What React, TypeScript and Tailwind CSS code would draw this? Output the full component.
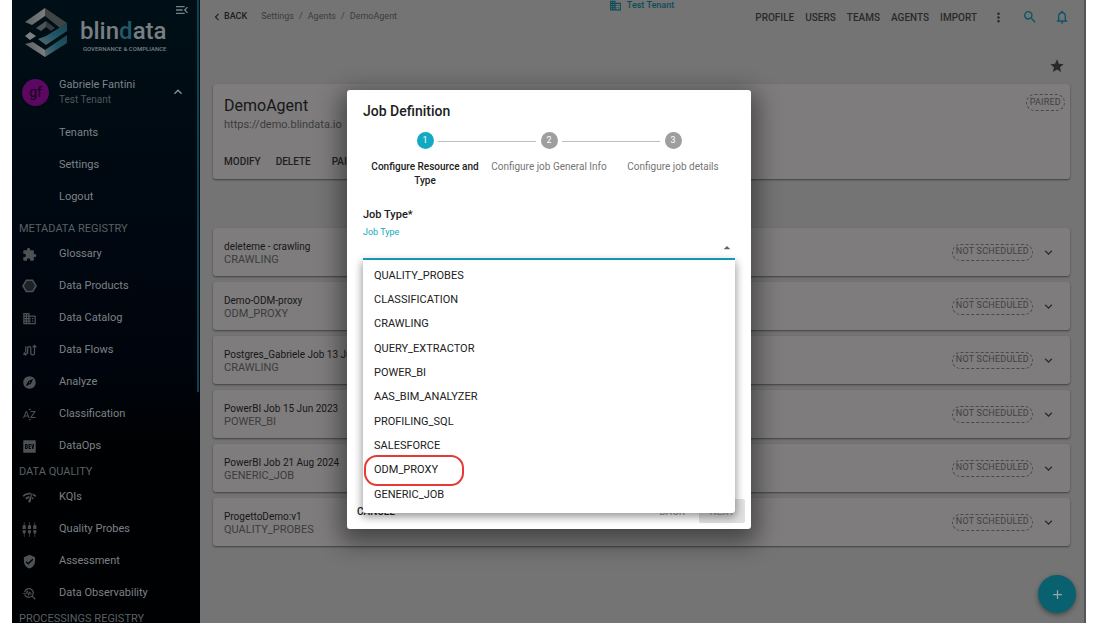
import {
  MdAdd,
  MdArrowDropUp,
  MdBusiness,
  MdChevronLeft,
  MdExpandLess,
  MdExpandMore,
  MdExplore,
  MdExtension,
  MdMenuOpen,
  MdMoreVert,
  MdNetworkCheck,
  MdOutlineNotifications,
  MdSearch,
  MdSortByAlpha,
  MdStar,
  MdTroubleshoot,
  MdVerifiedUser,
} from 'react-icons/md';

function HexagonIcon({ className }: { className?: string }) {
  return (
    <svg viewBox="0 0 24 24" fill="#1b2327" stroke="currentColor" strokeWidth="2.5" className={className}>
      <path d="M7 2h10l5.500 9L17 20H7l-5.500-9z" />
    </svg>
  );
}

function FlowIcon({ className }: { className?: string }) {
  return (
    <svg viewBox="0 0 24 24" fill="none" stroke="currentColor" strokeWidth="2" className={className}>
      <path d="M6 5v10M3 15l3 4 3-4M6 15a1 1 0 0 0 0 0M2 18h4M9 17V7a3 3 0 0 1 5 0v9a3 3 0 0 0 6 0V4M17 7l3-3 3 3" />
    </svg>
  );
}

function DevIcon({ className }: { className?: string }) {
  return (
    <svg viewBox="0 0 24 24" fill="currentColor" className={className}>
      <path
        fillRule="evenodd"
        d="M3 2h18a1 1 0 0 1 1 1v18a1 1 0 0 1-1 1H3a1 1 0 0 1-1-1V3a1 1 0 0 1 1-1zM5 8v8h2.500L9 14.500v-5L7.500 8zm1.500 1.500h1v5h-1zM10.500 8v8H14v-1.500h-2v-1.800h1.500v-1.400H12V9.500h2V8zM15 8l1.500 8h1.500l1.500-8H18l-.8 5-.7-5z"
      />
    </svg>
  );
}

function ProbesIcon({ className }: { className?: string }) {
  return (
    <svg viewBox="0 0 24 24" fill="currentColor" className={className}>
      {[0, 8.5, 17].map((x) => (
        <g key={x} transform={`translate(${x} 0)`}>
          <path d="M3 0h1v5h2v6H1V5h2zM1 13h5v3l-2 3v5H3v-5l-2-3z" />
        </g>
      ))}
    </svg>
  );
}

const userMenu = ['Tenants', 'Settings', 'Logout'];

const registry = [
  { label: 'Glossary', icon: MdExtension },
  { label: 'Data Products', icon: HexagonIcon },
  { label: 'Data Catalog', icon: MdBusiness },
  { label: 'Data Flows', icon: FlowIcon },
  { label: 'Analyze', icon: MdExplore },
  { label: 'Classification', icon: MdSortByAlpha },
  { label: 'DataOps', icon: DevIcon },
];

const quality = [
  { label: 'KQIs', icon: MdNetworkCheck },
  { label: 'Quality Probes', icon: ProbesIcon },
  { label: 'Assessment', icon: MdVerifiedUser },
  { label: 'Data Observability', icon: MdTroubleshoot },
];

const jobs = [
  { name: 'deleteme - crawling', type: 'CRAWLING' },
  { name: 'Demo-ODM-proxy', type: 'ODM_PROXY' },
  { name: 'Postgres_Gabriele Job 13 Jun 2023', type: 'CRAWLING' },
  { name: 'PowerBI Job 15 Jun 2023', type: 'POWER_BI' },
  { name: 'PowerBI Job 21 Aug 2024', type: 'GENERIC_JOB' },
  { name: 'ProgettoDemo:v1', type: 'QUALITY_PROBES' },
];

const jobTypes = [
  'QUALITY_PROBES',
  'CLASSIFICATION',
  'CRAWLING',
  'QUERY_EXTRACTOR',
  'POWER_BI',
  'AAS_BIM_ANALYZER',
  'PROFILING_SQL',
  'SALESFORCE',
  'ODM_PROXY',
  'GENERIC_JOB',
];

const steps = ['Configure Resource and Type', 'Configure job General Info', 'Configure job details'];

function Logo() {
  return (
    <div className="flex h-[66px] items-center pl-3">
      <svg viewBox="0 0 44 50" className="h-[50px] w-[44px] shrink-0">
        <defs>
          <linearGradient id="teal" x1="0" y1="1" x2="1" y2="0">
            <stop offset="0" stopColor="#5f696c" />
            <stop offset="0.5" stopColor="#1f5566" />
            <stop offset="1" stopColor="#1d4450" />
          </linearGradient>
          <linearGradient id="grey" x1="0" y1="0" x2="1" y2="0">
            <stop offset="0" stopColor="#5d6163" />
            <stop offset="1" stopColor="#7b7e80" />
          </linearGradient>
        </defs>
        <path d="M1 14 21 0v8L8 17z" fill="url(#grey)" />
        <path d="M21 0 43 15l-7 5L21 8z" fill="#3f4446" />
        <path d="M12 20 22 13v6l-5 4z" fill="#4e5456" />
        <path d="m22 13 9 7-4 3-5-4z" fill="#33393c" />
        <path d="M43 15v8L22 37l-8-6 8-3z" fill="url(#teal)" />
        <path d="m1 28 5-4 6 4-6 4z" fill="#7c8082" />
        <path d="m1 36 8-2 12 8v7z" fill="url(#grey)" />
        <path d="M21 42 43 27v8L21 49z" fill="url(#teal)" />
      </svg>
      <div className="ml-3 flex flex-col items-end pt-[3px]">
        <span className="text-[24px] leading-7 font-medium text-[#797e81]">
          blin<span className="text-[#21596a]">d</span>ata
        </span>
        <span className="text-[6px] leading-2 font-medium text-[#7a8083]">GOVERNANCE &amp; COMPLIANCE</span>
      </div>
    </div>
  );
}

function NavSection({ title, items }: { title: string; items: typeof registry }) {
  return (
    <section>
      <h2 className="h-[19px] pl-[7px] text-[11px] leading-[19px] text-[#596064]">{title}</h2>
      {items.map(({ label, icon: Icon }) => (
        <a key={label} href="#" className="flex h-8 items-center pl-[10px] text-[11px] text-[#7d8286]">
          <Icon className="mr-[22px] size-[15px] text-[#4b5154]" />
          {label}
        </a>
      ))}
    </section>
  );
}

function Sidebar() {
  return (
    <aside className="relative w-[188px] shrink-0 overflow-hidden bg-linear-to-b from-[#000f17] via-[#00040c] via-60% to-[#000102] to-75%">
      <div className="absolute top-0 right-px h-[392px] w-[2px] bg-[#0c4250]" />
      <button aria-label="Collapse menu" className="absolute top-[2px] right-[10px] text-[#768084]">
        <MdMenuOpen className="size-[16px]" />
      </button>
      <Logo />
      <button className="flex h-[51px] w-full items-center pr-[14px] pl-[10px] pt-px text-left">
        <span className="flex size-[27px] shrink-0 items-center justify-center rounded-full bg-[#5c0761] text-[14px] text-[#16051b]">
          gf
        </span>
        <span className="ml-[10px] flex-1">
          <span className="block text-[11px] leading-4 text-[#7d8286]">Gabriele Fantini</span>
          <span className="block text-[10px] leading-[14px] text-[#4f575b]">Test Tenant</span>
        </span>
        <MdExpandLess className="size-[16px] text-[#8b9093]" />
      </button>
      <nav>
        <div className="mb-[6px]">
          {userMenu.map((label) => (
            <a key={label} href="#" className="flex h-8 items-center pl-[47px] text-[11px] text-[#7d8286]">
              {label}
            </a>
          ))}
        </div>
        <NavSection title="METADATA REGISTRY" items={registry} />
        <NavSection title="DATA QUALITY" items={quality} />
        <NavSection title="PROCESSINGS REGISTRY" items={[]} />
      </nav>
    </aside>
  );
}

function Badge({ children }: { children: string }) {
  return (
    <span className="flex h-[17px] items-center rounded-full border border-dashed border-[#4a494a] px-[3px] text-[9px] tracking-wide text-[#424142]">
      {children}
    </span>
  );
}

function TopBar() {
  return (
    <header className="relative flex h-[34px] items-center justify-between">
      <nav className="-ml-[3px] flex items-center text-[9px] text-[#3b3c3c]">
        <a href="#" className="mr-[14px] flex items-center font-medium text-[#1f2020]">
          <MdChevronLeft className="size-[14px]" />
          BACK
        </a>
        <a href="#">Settings</a>
        <span className="mx-[5px]">/</span>
        <a href="#">Agents</a>
        <span className="mx-[5px]">/</span>
        <a href="#">DemoAgent</a>
      </nav>
      <div className="absolute inset-x-0 top-0 flex h-[11px] items-center justify-center gap-[5px] text-[9px] font-medium text-[#0a4d5a]">
        <MdBusiness className="size-[13px]" />
        Test Tenant
      </div>
      <nav className="flex items-center gap-[11px] text-[10px] font-medium text-[#2a2a2b]">
        {['PROFILE', 'USERS', 'TEAMS', 'AGENTS', 'IMPORT'].map((item) => (
          <a key={item} href="#">
            {item}
          </a>
        ))}
        <button aria-label="More" className="ml-[3px]">
          <MdMoreVert className="size-[15px]" />
        </button>
        <button aria-label="Search" className="ml-[5px] text-[#0a5563]">
          <MdSearch className="size-[16px]" />
        </button>
        <button aria-label="Notifications" className="ml-[5px] text-[#0a5563]">
          <MdOutlineNotifications className="size-[16px]" />
        </button>
      </nav>
    </header>
  );
}

function JobDialog() {
  return (
    <div className="absolute inset-0 flex items-start justify-center pt-[90px]">
      <div
        role="dialog"
        aria-labelledby="dialog-title"
        className="flex h-[439px] w-[404px] flex-col rounded-[3px] bg-white px-4 pt-[11px] text-[#212121] shadow-[0_8px_24px_6px_rgba(0,0,0,0.45)]"
      >
        <h2 id="dialog-title" className="text-[14px] leading-5 font-medium">
          Job Definition
        </h2>
        <ol className="mt-[11px] flex">
          {steps.map((step, i) => (
            <li key={step} className="relative flex flex-1 flex-col items-center">
              {i > 0 && <span className="absolute top-[9px] right-1/2 mr-[13px] h-px w-[98px] bg-[#bdbdbd]" />}
              <span
                className={`flex size-[17px] items-center justify-center rounded-full text-[9px] text-white ${
                  i === 0 ? 'bg-[#14a9c2]' : 'bg-[#9e9e9e]'
                }`}
              >
                {i + 1}
              </span>
              <span
                className={`mt-[11px] text-center text-[10px] leading-[14px] ${
                  i === 0 ? 'px-[6px] font-medium text-[#212121]' : 'whitespace-nowrap text-[#757575]'
                }`}
              >
                {step}
              </span>
            </li>
          ))}
        </ol>
        <div className="relative mt-[19px]">
          <p className="text-[11px] leading-4 font-medium">Job Type*</p>
          <label htmlFor="job-type" className="mt-[3px] block text-[9px] leading-3 text-[#14a9c2]">
            Job Type
          </label>
          <div className="relative border-b-2 border-[#14a9c2]">
            <select id="job-type" defaultValue="" className="block h-5 w-full appearance-none bg-transparent text-[11px] outline-none">
              <option value=""></option>
              {jobTypes.map((type) => (
                <option key={type}>{type}</option>
              ))}
            </select>
            <MdArrowDropUp className="pointer-events-none absolute top-[2px] right-0 size-[16px] text-[#616161]" />
          </div>
          <ul
            role="listbox"
            aria-label="Job Type"
            className="absolute inset-x-0 top-full z-10 flex h-[253px] flex-col justify-between rounded-b-[3px] bg-white pt-1 pb-[6px] text-[11px] shadow-[0_3px_8px_1px_rgba(0,0,0,0.4)]"
          >
            {jobTypes.map((type) => (
              <li key={type} role="option" aria-selected={false} className="relative flex h-6 items-center px-[11px]">
                {type}
                {type === 'ODM_PROXY' && (
                  <span className="absolute top-[-4px] left-px h-[31px] w-[100px] rounded-[13px] border-2 border-[#e53935]" />
                )}
              </li>
            ))}
          </ul>
        </div>
        <div className="mt-auto -mr-[10px] mb-[6px] -ml-[6px] flex items-center text-[10px] font-medium">
          <button>CANCEL</button>
          <button disabled className="mr-[14px] ml-auto text-[#a6a6a6]">
            BACK
          </button>
          <button disabled className="h-6 w-[46px] rounded-[2px] bg-[#e0e0e0] text-[#a6a6a6]">
            NEXT
          </button>
        </div>
      </div>
    </div>
  );
}

export default function App() {
  return (
    <div className="relative h-screen overflow-hidden bg-white px-3 pb-px font-[Roboto,sans-serif]">
      <div className="flex h-full">
        <Sidebar />
        <main className="relative min-w-0 flex-1 border-r-2 border-[#565557] bg-[#757474] pr-[14px] pl-[13px]">
          <TopBar />
          <div className="flex h-[50px] items-center justify-end pr-[5px] pt-[13px]">
            <MdStar className="size-[16px] text-[#2a2a2b]" />
          </div>
          <section className="flex h-[95px] justify-between rounded-[3px] bg-[#7e7c7d] pt-[10px] pr-[5px] pl-[11px] shadow-[0_1px_2px_rgba(0,0,0,0.45)]">
            <div>
              <h1 className="text-base leading-6 text-[#161717]">DemoAgent</h1>
              <p className="text-[11px] leading-[14px] text-[#3b3c3c]">https://demo.blindata.io</p>
              <div className="mt-[22px] flex gap-[15px] text-[10px] leading-4 font-medium text-[#1f2020]">
                <button>MODIFY</button>
                <button>DELETE</button>
                <button className="ml-[6px]">PAIR</button>
              </div>
            </div>
            <Badge>PAIRED</Badge>
          </section>
          <div className="mt-[49px] flex flex-col gap-[6px]">
            {jobs.map((job) => (
              <article
                key={job.name}
                className="flex h-12 items-center rounded-[3px] bg-[#7e7c7d] pr-[14px] pl-[11px] shadow-[0_1px_2px_rgba(0,0,0,0.45)]"
              >
                <div className="flex-1 pt-[2px]">
                  <h3 className="text-[10px] leading-[13px] text-[#161717]">{job.name}</h3>
                  <p className="text-[11px] leading-[13px] text-[#3b3c3c]">{job.type}</p>
                </div>
                <Badge>NOT SCHEDULED</Badge>
                <button aria-label={`Expand ${job.name}`} className="ml-2 text-[#2a2a2b]">
                  <MdExpandMore className="size-[15px]" />
                </button>
              </article>
            ))}
          </div>
          <button
            aria-label="Add job"
            className="absolute right-[8px] bottom-[10px] flex size-[38px] items-center justify-center rounded-full bg-[#09616f] text-[#9aa7aa] shadow-[0_2px_5px_rgba(0,0,0,0.4)]"
          >
            <MdAdd className="size-[15px]" />
          </button>
        </main>
      </div>
      <JobDialog />
    </div>
  );
}
